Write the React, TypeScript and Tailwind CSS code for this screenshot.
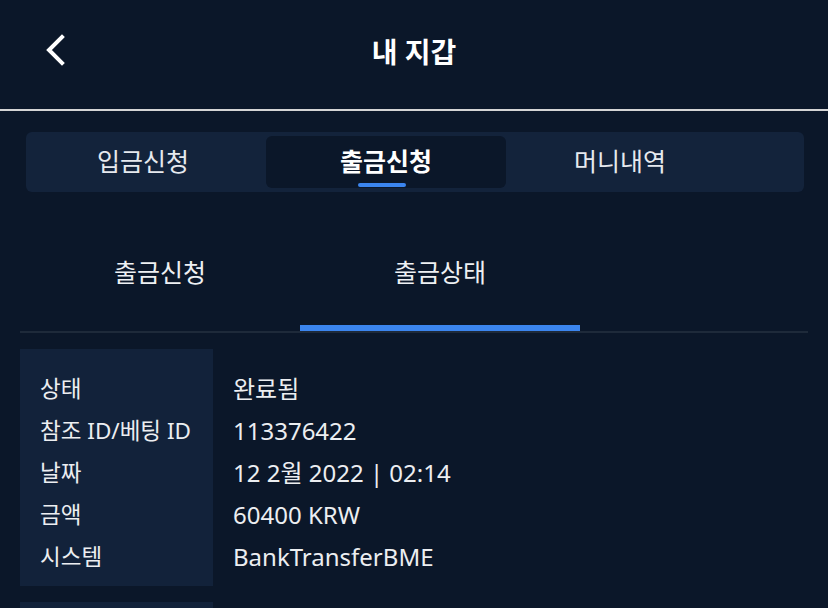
import React from 'react';

const rows = [
  { label: '상태', value: '완료됨' },
  { label: '참조 ID/베팅 ID', value: '113376422' },
  { label: '날짜', value: '12 2월 2022 | 02:14' },
  { label: '금액', value: '60400 KRW' },
  { label: '시스템', value: 'BankTransferBME' },
];

const font = { fontFamily: '"Noto Sans", "Noto Sans CJK KR", sans-serif' };

const App: React.FC = () => {
  return (
    <div className="w-[828px] h-[608px] overflow-hidden bg-[#0b1729] text-white" style={font}>
      {/* header */}
      <div className="relative h-[111px] flex items-center justify-center border-b-2 border-[#d4d4d4]">
        <button className="absolute left-[44px] top-[34px] w-[24px] h-[32px]">
          <svg width="24" height="32" viewBox="0 0 24 32" fill="none">
            <polyline points="18,3 5,16 18,29" stroke="white" strokeWidth="4" strokeLinecap="square" />
          </svg>
        </button>
        <h1 className="text-[28px] font-bold leading-none -mt-[5px]">내 지갑</h1>
      </div>

      {/* main tabs */}
      <div className="mt-[21px] ml-[26px] mr-[24px] h-[60px] rounded-md bg-[#13233b] flex items-center">
        <div className="w-[234px] h-[52px] flex items-center justify-center text-[25px] text-[#e6e9ee]">입금신청</div>
        <div className="relative ml-[6px] w-[240px] h-[52px] rounded-md bg-[#0b1729] flex items-center justify-center text-[25px] font-bold">
          출금신청
          <span className="absolute bottom-[1px] left-[92px] w-[48px] h-[4px] rounded-sm bg-[#3b85ee]" />
        </div>
        <div className="w-[228px] h-[52px] flex items-center justify-center text-[25px] text-[#e6e9ee]">머니내역</div>
      </div>

      {/* sub tabs */}
      <div className="mx-[20px] flex border-b-2 border-[#1e2a3a]">
        <div className="w-[280px] flex flex-col items-center">
          <div className="pt-[64px] h-[96px] text-[25px] leading-[32px] text-[#eef0f3]">출금신청</div>
          <div className="mt-[37px] h-[6px] w-full" />
        </div>
        <div className="w-[280px] flex flex-col items-center">
          <div className="pt-[64px] h-[96px] text-[25px] leading-[32px] text-[#eef0f3]">출금상태</div>
          <div className="mt-[37px] h-[6px] w-full bg-[#3b85ee]" />
        </div>
      </div>

      {/* detail cards */}
      <div className="mx-[20px] mt-[16px] flex flex-col gap-[16px]">
        <div className="flex">
          <div className="w-[193px] bg-[#12223a] pl-[20px] pt-[19px] pb-[8px]">
            {rows.map((r) => (
              <div key={r.label} className="h-[42px] leading-[42px] text-[22.5px] whitespace-nowrap text-[#eceef1]">{r.label}</div>
            ))}
          </div>
          <div className="pl-[20px] pt-[19px] pb-[8px]">
            {rows.map((r) => (
              <div key={r.label} className="h-[42px] leading-[42px] text-[24px] whitespace-nowrap text-[#eceef1]">{r.value}</div>
            ))}
          </div>
        </div>
        <div className="flex">
          <div className="w-[193px] h-[60px] bg-[#12223a]" />
        </div>
      </div>
    </div>
  );
};

export default App;
